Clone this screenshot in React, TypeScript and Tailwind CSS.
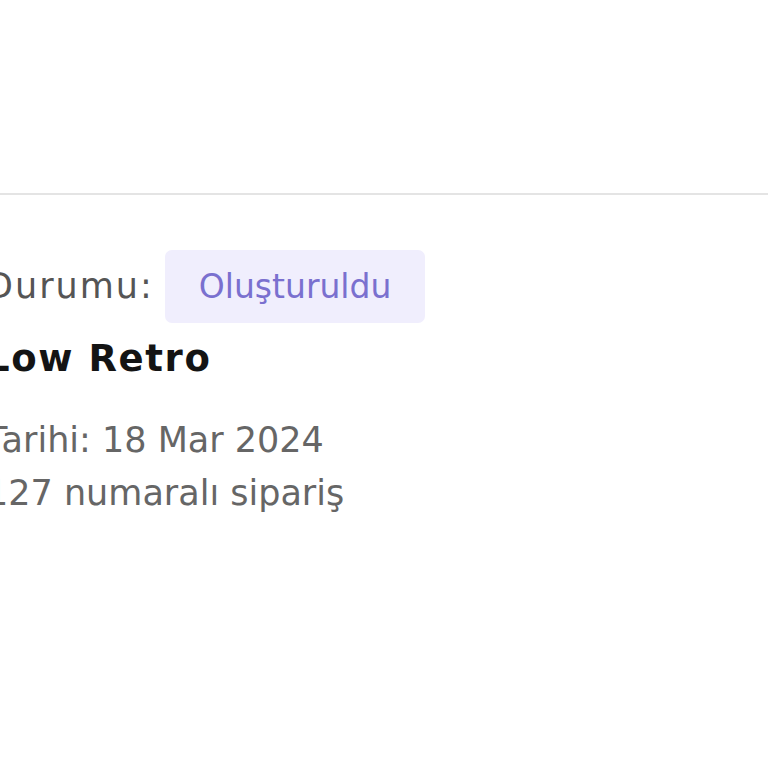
export default function App() {
  return (
    <div className="w-[768px] h-[768px] bg-white overflow-hidden" style={{ fontFamily: '"DejaVu Sans", "Noto Sans", sans-serif' }}>
      <div className="h-[193px]" />
      <div className="h-[2px] bg-[#e4e4e4]" />

      <div className="-ml-[14px] pt-[55px]">
        {/* Status row */}
        <div className="flex items-center">
          <span className="text-[35px] tracking-[2px] text-[#555555] leading-none">Durumu:</span>
          <span className="ml-[11px] inline-flex items-center h-[73px] pl-[34px] pr-[34px] rounded-[7px] bg-[#f0eefd] text-[33px] text-[#7a70cf] leading-none">
            Oluşturuldu
          </span>
        </div>

        {/* Product name */}
        <div className="mt-[17px] text-[37px] font-bold tracking-[1.6px] text-[#141414] leading-none">Low Retro</div>

        {/* Details */}
        <div className="mt-[37px] text-[35px] text-[#666666] leading-[53px]">
          <div>Tarihi: 18 Mar 2024</div>
          <div>127 numaralı sipariş</div>
        </div>
      </div>
    </div>
  );
}
